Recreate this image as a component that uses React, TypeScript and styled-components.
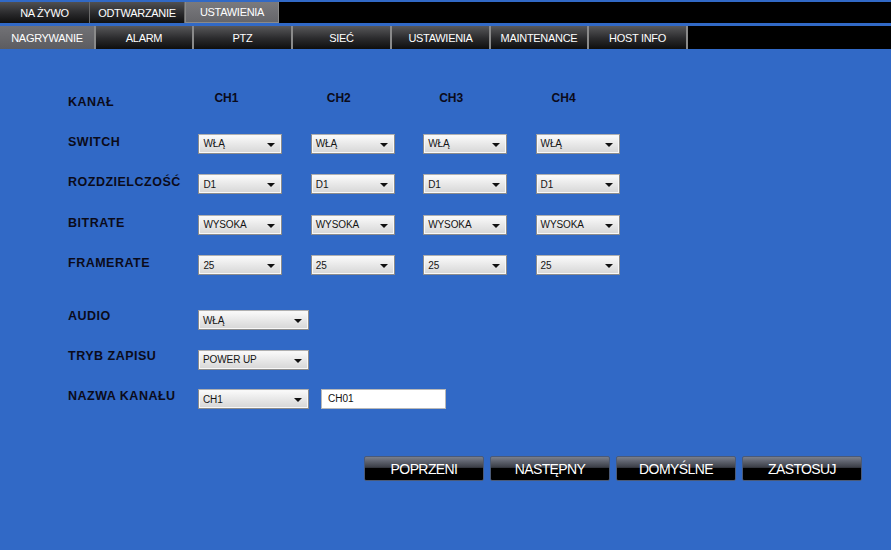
import React from "react";
import styled, { createGlobalStyle } from "styled-components";

const Global = createGlobalStyle`
  html, body { margin: 0; padding: 0; }
  body {
    background: #3169c6;
    font-family: "Liberation Sans", Arial, sans-serif;
    width: 891px;
    height: 550px;
    overflow: hidden;
  }
`;

const Page = styled.div`
  width: 891px;
  height: 550px;
  background: #3169c6;
  padding-top: 2px;
  box-sizing: border-box;
`;

const TabBar = styled.div<{ $h: number }>`
  display: flex;
  height: ${(p) => p.$h}px;
  background: #000;
`;

const TopTab = styled.div<{ $w: number; $active?: boolean }>`
  width: ${(p) => p.$w}px;
  box-sizing: border-box;
  display: flex;
  align-items: center;
  justify-content: center;
  color: #fff;
  font-size: 11px;
  letter-spacing: -0.3px;
  border-right: 1px solid #6a6a6a;
  background: ${(p) =>
    p.$active
      ? "linear-gradient(#7a7a7e, #66666a)"
      : "linear-gradient(#505052, #262628 60%, #101010)"};
  ${(p) => (p.$active ? "border: 1px solid #8a8a8a; border-top: none;" : "")}
`;

const Gap = styled.div<{ $h: number }>`
  height: ${(p) => p.$h}px;
`;

const SubTab = styled.div<{ $w: number; $active?: boolean }>`
  width: ${(p) => p.$w}px;
  box-sizing: border-box;
  display: flex;
  align-items: center;
  justify-content: center;
  color: #fff;
  font-size: 11px;
  letter-spacing: -0.3px;
  border-right: 2px solid #8a8a8a;
  background: ${(p) =>
    p.$active
      ? "linear-gradient(#727276, #5c5c60)"
      : "linear-gradient(#58585a, #2a2a2c 55%, #0e0e0e)"};
`;

const Content = styled.div`
  padding: 44px 0 0 68px;
`;

const ChannelGrid = styled.div`
  display: grid;
  grid-template-columns: 102px repeat(4, 84px);
  grid-auto-rows: 20px;
  column-gap: 28.4px;
  row-gap: 20.5px;
`;

const Label = styled.div<{ $offset?: number }>`
  font-size: 12.5px;
  font-weight: bold;
  color: #0b0b1a;
  line-height: 16px;
  margin-top: ${(p) => p.$offset ?? 0}px;
  white-space: nowrap;
  letter-spacing: 0.5px;
`;

const ChHead = styled.div`
  font-size: 12px;
  font-weight: bold;
  color: #0b0b1a;
  line-height: 12px;
  padding-left: 16px;
  margin-top: -1px;
`;

const SelectBox = styled.div<{ $w?: number }>`
  position: relative;
  width: ${(p) => (p.$w ? `${p.$w}px` : "100%")};
  height: 20px;
  box-sizing: border-box;
  border: 1px solid #8c8c8c;
  border-top-color: #b0b0b0;
  background: linear-gradient(#fbfbfb, #eaeaea 45%, #d6d6d6);
  display: flex;
  align-items: center;
  padding-left: 4px;
  font-size: 10px;
  color: #141414;
  letter-spacing: -0.1px;
  box-shadow: inset 0 0 0 1px #f8f8f8;
`;

const Arrow = styled.span`
  position: absolute;
  right: 6px;
  top: 8px;
  width: 0;
  height: 0;
  border-left: 4px solid transparent;
  border-right: 4px solid transparent;
  border-top: 4px solid #111;
`;

const Select = ({ value, w }: { value: string; w?: number }) => (
  <SelectBox $w={w}>
    {value}
    <Arrow />
  </SelectBox>
);

const ExtraGrid = styled.div`
  display: grid;
  grid-template-columns: 118px auto auto;
  justify-content: start;
  grid-auto-rows: 20px;
  column-gap: 12px;
  row-gap: 19.5px;
  margin-top: 35px;
`;

const TextInput = styled.div`
  width: 125px;
  height: 20px;
  box-sizing: border-box;
  background: #fff;
  border: 1px solid #b8b8b8;
  font-size: 10px;
  color: #111;
  padding: 3px 0 0 6px;
`;

const Spacer = styled.div``;

const Buttons = styled.div`
  display: flex;
  justify-content: flex-end;
  gap: 6px;
  padding-right: 29px;
  margin-top: 47px;
`;

const Button = styled.div`
  width: 120px;
  height: 25px;
  box-sizing: border-box;
  border: 1px solid #4a5a78;
  border-radius: 2px;
  background: linear-gradient(#7a7f8c, #3a3d46 45%, #000 50%, #000);
  color: #fff;
  font-size: 14px;
  letter-spacing: -0.6px;
  display: flex;
  align-items: center;
  justify-content: center;
`;

const topTabs = [
  { t: "NA ŻYWO", w: 90 },
  { t: "ODTWARZANIE", w: 95 },
  { t: "USTAWIENIA", w: 94, active: true },
];

const subTabs = [
  { t: "NAGRYWANIE", w: 96, active: true },
  { t: "ALARM", w: 98 },
  { t: "PTZ", w: 99 },
  { t: "SIEĆ", w: 99 },
  { t: "USTAWIENIA", w: 99 },
  { t: "MAINTENANCE", w: 98 },
  { t: "HOST INFO", w: 99 },
];

const rows = [
  { label: "SWITCH", value: "WŁĄ" },
  { label: "ROZDZIELCZOŚĆ", value: "D1" },
  { label: "BITRATE", value: "WYSOKA" },
  { label: "FRAMERATE", value: "25" },
];

export default function App() {
  return (
    <Page>
      <Global />
      <TabBar $h={21}>
        {topTabs.map((t) => (
          <TopTab key={t.t} $w={t.w} $active={t.active}>
            {t.t}
          </TopTab>
        ))}
      </TabBar>
      <Gap $h={3} />
      <TabBar $h={23}>
        {subTabs.map((t) => (
          <SubTab key={t.t} $w={t.w} $active={t.active}>
            {t.t}
          </SubTab>
        ))}
      </TabBar>
      <Content>
        <ChannelGrid>
          <Label $offset={1}>KANAŁ</Label>
          {["CH1", "CH2", "CH3", "CH4"].map((c) => (
            <ChHead key={c}>{c}</ChHead>
          ))}
          {rows.map((r) => (
            <React.Fragment key={r.label}>
              <Label $offset={0}>{r.label}</Label>
              {[0, 1, 2, 3].map((i) => (
                <Select key={i} value={r.value} />
              ))}
            </React.Fragment>
          ))}
        </ChannelGrid>
        <ExtraGrid>
          <Label $offset={-2}>AUDIO</Label>
          <Select value="WŁĄ" w={111} />
          <Spacer />
          <Label $offset={-2}>TRYB ZAPISU</Label>
          <Select value="POWER UP" w={111} />
          <Spacer />
          <Label $offset={-1}>NAZWA KANAŁU</Label>
          <Select value="CH1" w={111} />
          <TextInput>CH01</TextInput>
        </ExtraGrid>
      </Content>
      <Buttons>
        <Button>POPRZENI</Button>
        <Button>NASTĘPNY</Button>
        <Button>DOMYŚLNE</Button>
        <Button>ZASTOSUJ</Button>
      </Buttons>
    </Page>
  );
}
